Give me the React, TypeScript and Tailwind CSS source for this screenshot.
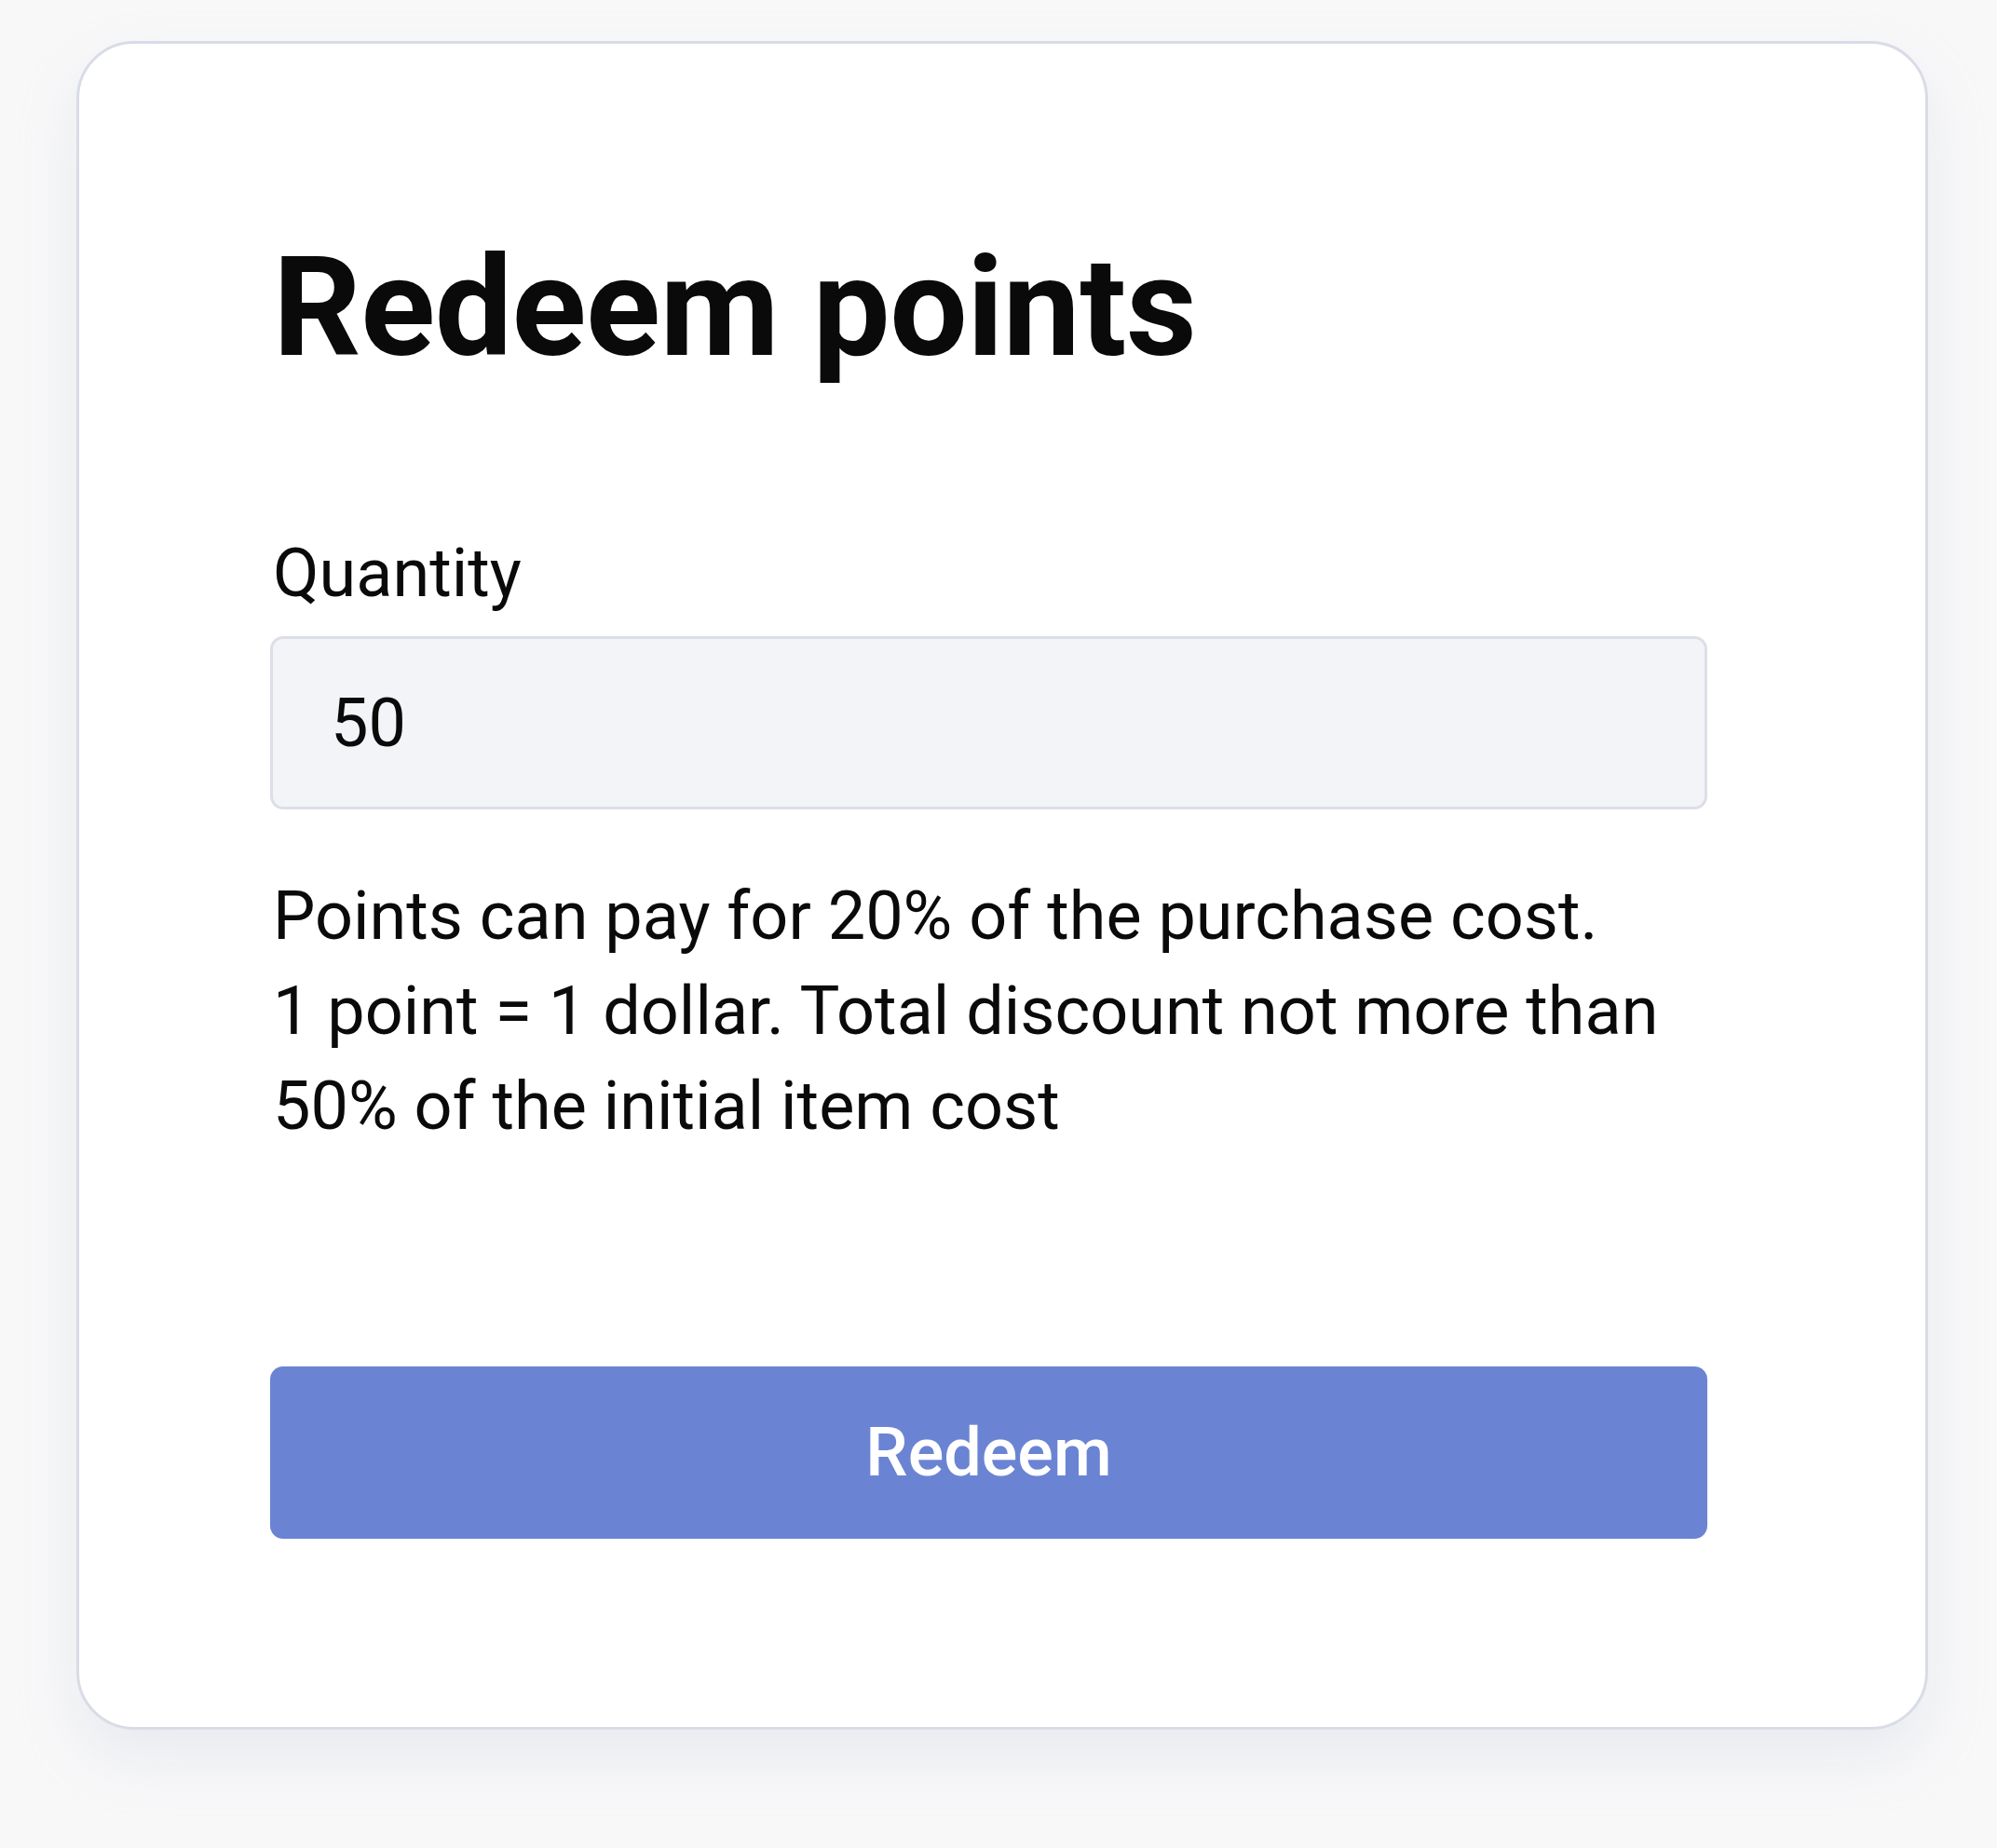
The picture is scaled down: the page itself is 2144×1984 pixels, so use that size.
import React, { useState } from 'react';

export default function App() {
  const [qty, setQty] = useState('50');

  return (
    <div className="min-h-screen w-full bg-[#f8f8f9] pt-[44px] pl-[82px] font-['Roboto','Liberation_Sans',sans-serif] text-[#0a0a0a]">
      <div className="w-[1988px] h-[1813px] bg-white border-[3px] border-[#d9dce6] rounded-[62px] shadow-[0_30px_60px_rgba(200,205,220,0.3)] pl-[205px] pr-[234px] pt-[210px] flex flex-col">
        <h1 className="pl-[3px] text-[148px] leading-[148px] font-bold tracking-[-0.5px]">Redeem points</h1>

        <label className="mt-[157px] pl-[3px] text-[72px] leading-[108px]">Quantity</label>
        <input
          value={qty}
          onChange={(e) => setQty(e.target.value)}
          className="mt-[13px] h-[186px] w-full rounded-[14px] border-[3px] border-[#dcdfe6] bg-[#f3f4f8] px-[62px] text-[72px] text-[#0a0a0a] outline-none"
        />

        <p className="mt-[64px] pl-[3px] text-[72px] leading-[102px]">
          Points can pay for 20% of the purchase cost.
          <br />
          1 point = 1 dollar. Total discount not more than
          <br />
          50% of the initial item cost
        </p>

        <button className="mt-[228px] h-[185px] w-full rounded-[14px] bg-[#6a84d3] text-[72px] font-medium text-white">
          Redeem
        </button>
      </div>
    </div>
  );
}
